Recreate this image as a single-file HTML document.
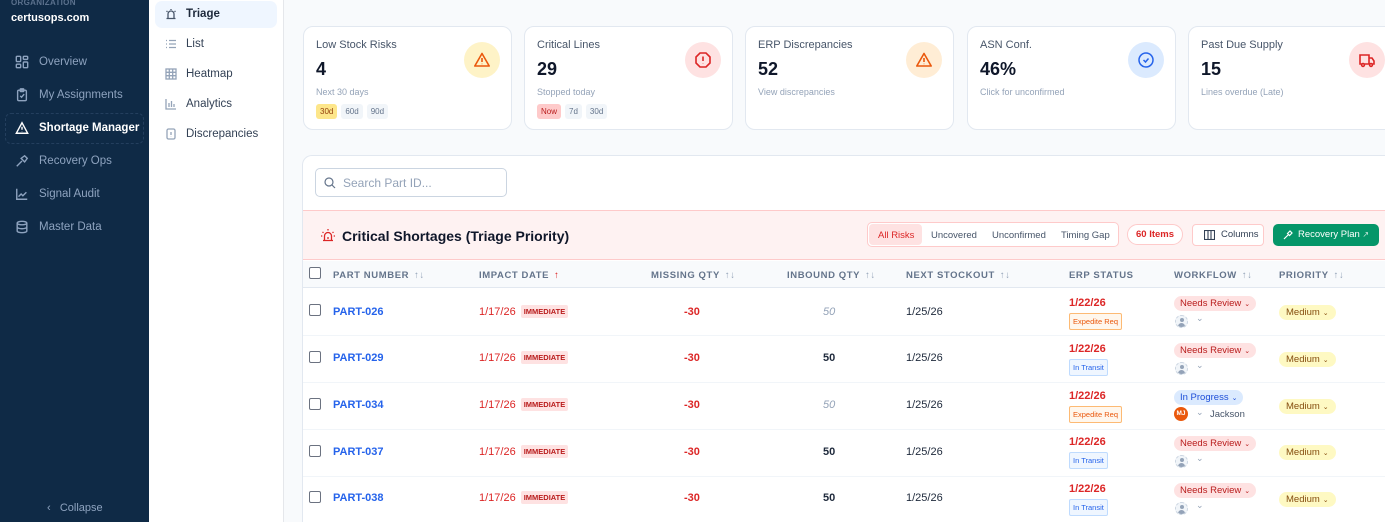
<!DOCTYPE html>
<html><head><meta charset="utf-8"><style>
*{box-sizing:border-box;margin:0;padding:0}
html,body{width:1385px;height:522px;overflow:hidden}
body{font-family:"Liberation Sans",sans-serif;background:#f8fafc;position:relative;font-size:12px;color:#1e293b}
.a{position:absolute;white-space:nowrap}
#sb{left:0;top:0;width:149px;height:522px;background:#0f2a46}
.nav{position:absolute;left:15px;font-size:11.5px;color:#8ea3bf;display:flex;align-items:center;gap:10px}
.nav svg{width:14px;height:14px;stroke:#8ea3bf;fill:none;stroke-width:1.6}
#sub{left:149px;top:0;width:135px;height:522px;background:#fff;border-right:1px solid #e5e7eb}
.sn{position:absolute;left:16px;font-size:11.5px;color:#334155;display:flex;align-items:center;gap:9px}
.sn svg{width:12px;height:12px;stroke:#94a3b8;fill:none;stroke-width:1.3}
.card{position:absolute;top:26px;height:104px;width:209px;background:#fff;border:1px solid #e2e8f0;border-radius:10px}
.card .t{position:absolute;left:12px;top:12px;font-size:11px;color:#475569}
.card .v{position:absolute;left:12px;top:32px;font-size:18px;font-weight:bold;color:#0f172a}
.card .s{position:absolute;left:12px;top:60px;font-size:9px;color:#94a3b8}
.card .ic{position:absolute;left:160px;top:15px;width:36px;height:36px;border-radius:50%;display:flex;align-items:center;justify-content:center}
.chips{position:absolute;left:12px;top:77px;display:flex;gap:4px}
.chips span{font-size:8px;color:#64748b;background:#f1f5f9;border-radius:3px;padding:3px 4px}
#panel{left:302px;top:155px;width:1100px;height:367px;background:#fff;border:1px solid #e2e8f0;border-bottom:none;border-radius:10px 10px 0 0}
.th{position:absolute;top:270px;font-size:9.5px;font-weight:bold;color:#64748b;letter-spacing:.6px}
.srt{color:#94a3b8;font-weight:normal;margin-left:5px}
.cb{position:absolute;left:309px;width:12px;height:12px;border:1.3px solid #6b7280;border-radius:2px;background:#fff}
.pn{position:absolute;left:333px;font-size:11px;font-weight:bold;color:#2563eb}
.dt{position:absolute;left:479px;font-size:11px;color:#dc2626}
.imm{font-size:7.5px;font-weight:bold;color:#b91c1c;background:#fee2e2;border-radius:2px;padding:2px 3px;margin-left:5px;vertical-align:1px}
.mq{position:absolute;left:684px;font-size:11px;font-weight:bold;color:#dc2626}
.iq{position:absolute;left:823px;font-size:11px}
.ns{position:absolute;left:906px;font-size:11px;color:#1e293b}
.ed{position:absolute;left:1069px;font-size:11px;font-weight:bold;color:#dc2626}
.eb{position:absolute;left:1069px;font-size:7.5px;border-radius:2px;padding:3px 3px}
.exp{color:#ea580c;background:#fff7ed;border:1px solid #fdba74}
.tr{color:#2563eb;background:#eff6ff;border:1px solid #bfdbfe}
.wf{position:absolute;left:1174px;font-size:9.5px;border-radius:9px;padding:2px 6px}
.nr{background:#fee2e2;color:#b91c1c}
.ip{background:#dbeafe;color:#1d4ed8}
.av{position:absolute;left:1175px;width:13px;height:13px;border-radius:50%;border:1px dashed #cbd5e1;background:#f1f5f9;overflow:hidden}
.av:before{content:"";position:absolute;left:3.5px;top:2px;width:4px;height:4px;border-radius:50%;background:#94a3b8}
.av:after{content:"";position:absolute;left:2px;top:7px;width:7px;height:5px;border-radius:4px 4px 0 0;background:#94a3b8}
.pr{position:absolute;left:1279px;font-size:9.5px;background:#fef9c3;color:#854d0e;border-radius:9px;padding:2px 7px}
.rl{position:absolute;left:303px;width:1090px;height:1px;background:#f1f5f9}
.car{font-size:7px;margin-left:3px}
</style></head><body>
<div id="sb" class="a">
<div class="a" style="left:11px;top:-2px;font-size:8px;color:#5b718d;font-weight:bold;letter-spacing:.3px">ORGANIZATION</div>
<div class="a" style="left:11px;top:12px;font-size:11px;color:#fff;font-weight:bold">certusops.com</div>
<div class="nav" style="top:55px"><svg viewBox="0 0 16 16"><rect x="1.5" y="1.5" width="5" height="6" rx="1"/><rect x="9.5" y="1.5" width="5" height="3.5" rx="1"/><rect x="9.5" y="8" width="5" height="6.5" rx="1"/><rect x="1.5" y="10.5" width="5" height="4" rx="1"/></svg>Overview</div>
<div class="nav" style="top:88px"><svg viewBox="0 0 16 16"><rect x="3" y="2.5" width="10" height="12" rx="1.5"/><rect x="6" y="1" width="4" height="3" rx=".5"/><path d="M6 9l1.5 1.5L10.5 7"/></svg>My Assignments</div>
<div class="a" style="left:5px;top:113px;width:139px;height:31px;border:1px dashed #243f5e;border-radius:6px"></div>
<div class="nav" style="top:121px;color:#fff;font-weight:bold"><svg viewBox="0 0 16 16" style="stroke:#fff"><path d="M8 2L1.5 14h13z"/><path d="M8 6.5v3.5M8 11.8v.4"/></svg>Shortage Manager</div>
<div class="nav" style="top:154px"><svg viewBox="0 0 16 16"><path d="M2 14l6-6M7 5l4-3 3 3-3 4z"/></svg>Recovery Ops</div>
<div class="nav" style="top:187px"><svg viewBox="0 0 16 16"><path d="M2 2v12h12M4 11l3-3 2 2 4-4"/></svg>Signal Audit</div>
<div class="nav" style="top:220px"><svg viewBox="0 0 16 16"><ellipse cx="8" cy="3.5" rx="5.5" ry="2"/><path d="M2.5 3.5v9c0 1.1 2.5 2 5.5 2s5.5-.9 5.5-2v-9M2.5 8c0 1.1 2.5 2 5.5 2s5.5-.9 5.5-2"/></svg>Master Data</div>
<div class="a" style="left:47px;top:502px;font-size:11px;color:#8ea3bf">‹&nbsp;&nbsp;&nbsp;Collapse</div>
</div>
<div id="sub" class="a">
<div class="a" style="left:6px;top:1px;width:122px;height:27px;background:#eff6ff;border-radius:7px"></div>
<div class="sn" style="top:8px;color:#1e293b;font-weight:bold"><svg viewBox="0 0 12 12" style="stroke:#475569"><path d="M3 10V6a3 3 0 016 0v4M1.5 10.5h9M6 1v1M1.5 3l1 .8M10.5 3l-1 .8"/></svg>Triage</div>
<div class="sn" style="top:38px"><svg viewBox="0 0 12 12"><path d="M1 2.5h1M4 2.5h7M1 6h1M4 6h7M1 9.5h1M4 9.5h7"/></svg>List</div>
<div class="sn" style="top:68px"><svg viewBox="0 0 12 12"><rect x="1" y="1" width="10" height="10"/><path d="M4.3 1v10M7.7 1v10M1 4.3h10M1 7.7h10"/></svg>Heatmap</div>
<div class="sn" style="top:98px"><svg viewBox="0 0 12 12"><path d="M1 1v10h10M4 9V5M6.5 9V3M9 9V6"/></svg>Analytics</div>
<div class="sn" style="top:128px"><svg viewBox="0 0 12 12"><rect x="2" y="1" width="8" height="10" rx="1.5"/><path d="M6 4v3M6 8.5v.3"/></svg>Discrepancies</div>
</div>

<div class="card" style="left:303px"><div class="t">Low Stock Risks</div><div class="v">4</div><div class="s">Next 30 days</div>
<div class="chips"><span style="background:#fde68a;color:#92400e">30d</span><span>60d</span><span>90d</span></div>
<div class="ic" style="background:#fef3c7"><svg width="18" height="18" viewBox="0 0 18 18" fill="none" stroke="#ea580c" stroke-width="1.6"><path d="M9 2.5L1.8 15h14.4z" stroke-linejoin="round"/><path d="M9 7v4M9 12.8v.3"/></svg></div></div>
<div class="card" style="left:524px"><div class="t">Critical Lines</div><div class="v">29</div><div class="s">Stopped today</div>
<div class="chips"><span style="background:#fecaca;color:#b91c1c">Now</span><span>7d</span><span>30d</span></div>
<div class="ic" style="background:#fee2e2"><svg width="18" height="18" viewBox="0 0 18 18" fill="none" stroke="#dc2626" stroke-width="1.6"><path d="M6 2h6l4 4v6l-4 4H6l-4-4V6z"/><path d="M9 5.5v4.5M9 12v.3"/></svg></div></div>
<div class="card" style="left:745px"><div class="t">ERP Discrepancies</div><div class="v">52</div><div class="s">View discrepancies</div>
<div class="ic" style="background:#ffedd5"><svg width="18" height="18" viewBox="0 0 18 18" fill="none" stroke="#ea580c" stroke-width="1.6"><path d="M9 2.5L1.8 15h14.4z" stroke-linejoin="round"/><path d="M9 7v4M9 12.8v.3"/></svg></div></div>
<div class="card" style="left:967px"><div class="t">ASN Conf.</div><div class="v">46%</div><div class="s">Click for unconfirmed</div>
<div class="ic" style="background:#dbeafe"><svg width="18" height="18" viewBox="0 0 18 18" fill="none" stroke="#2563eb" stroke-width="1.5"><circle cx="9" cy="9" r="7"/><path d="M6.5 9l2 2 3-3.5"/></svg></div></div>
<div class="card" style="left:1188px"><div class="t">Past Due Supply</div><div class="v">15</div><div class="s">Lines overdue (Late)</div>
<div class="ic" style="background:#fee2e2"><svg width="18" height="18" viewBox="0 0 18 18" fill="none" stroke="#dc2626" stroke-width="1.6"><path d="M2 4h9v9H2zM11 7h3l2 3v3h-5"/><circle cx="5" cy="14" r="1.4" fill="#fee2e2"/><circle cx="13" cy="14" r="1.4" fill="#fee2e2"/></svg></div></div>

<div id="panel" class="a"></div>
<div class="a" style="left:315px;top:168px;width:192px;height:29px;border:1px solid #cbd5e1;border-radius:5px;background:#fff"></div>
<svg class="a" style="left:324px;top:177px" width="12" height="12" viewBox="0 0 12 12" fill="none" stroke="#64748b" stroke-width="1.2"><circle cx="5" cy="5" r="4"/><path d="M8 8l3 3"/></svg>
<div class="a" style="left:343px;top:176px;font-size:12px;color:#94a3b8">Search Part ID...</div>

<div class="a" style="left:303px;top:210px;width:1090px;height:50px;background:#fef2f2;border-top:1px solid #fecaca;border-bottom:1px solid #fecaca"></div>
<svg class="a" style="left:320px;top:227px" width="16" height="16" viewBox="0 0 16 16" fill="none" stroke="#dc2626" stroke-width="1.3"><path d="M4.5 13V9a3.5 3.5 0 017 0v4M3 13.5h10M8 2v1.5M2.5 5l1 .8M13.5 5l-1 .8M1 9h1.3M13.7 9H15M8 10v2"/></svg>
<div class="a" style="left:342px;top:228px;font-size:14px;font-weight:bold;color:#0f172a">Critical Shortages (Triage Priority)</div>
<div class="a" style="left:867px;top:222px;width:252px;height:25px;background:#fff;border:1px solid #fecaca;border-radius:5px"></div>
<div class="a" style="left:869px;top:224px;width:53px;height:21px;background:#fee2e2;border-radius:4px"></div>
<div class="a" style="left:878px;top:230px;font-size:9.5px;color:#dc2626">All Risks</div>
<div class="a" style="left:931px;top:230px;font-size:9.5px;color:#475569">Uncovered</div>
<div class="a" style="left:992px;top:230px;font-size:9.5px;color:#475569">Unconfirmed</div>
<div class="a" style="left:1061px;top:230px;font-size:9.5px;color:#475569">Timing Gap</div>
<div class="a" style="left:1127px;top:224px;width:56px;height:21px;border:1px solid #fecaca;border-radius:11px;background:#fff;font-size:9.5px;font-weight:bold;color:#dc2626;text-align:center;line-height:19px">60 Items</div>
<div class="a" style="left:1192px;top:224px;width:72px;height:22px;border:1px solid #fecaca;border-radius:4px;background:#fff;font-size:9.5px;color:#334155;line-height:20px;padding-left:28px">Columns</div>
<svg class="a" style="left:1204px;top:230px" width="11" height="10" viewBox="0 0 11 10" fill="none" stroke="#334155" stroke-width="1.1"><rect x=".5" y=".5" width="10" height="9"/><path d="M4 .5v9M7 .5v9"/></svg>
<div class="a" style="left:1273px;top:224px;width:106px;height:22px;background:#059669;border-radius:5px;font-size:9.5px;color:#fff;line-height:22px;padding-left:25px">Recovery Plan <span style="font-size:8px;opacity:.8">↗</span></div>
<svg class="a" style="left:1283px;top:230px" width="10" height="10" viewBox="0 0 10 10" fill="none" stroke="#fff" stroke-width="1.2"><path d="M1 9l4-4M4.5 3.5L7 1l2 2-2.5 2.5z"/></svg>

<div class="a" style="left:303px;top:261px;width:1090px;height:27px;background:#f8fafc;border-bottom:1px solid #e2e8f0"></div>
<div class="cb" style="top:267px"></div>
<div class="th" style="left:333px">PART NUMBER<span class="srt">↑↓</span></div>
<div class="th" style="left:479px">IMPACT DATE<span class="srt" style="color:#dc2626;font-weight:bold">↑</span></div>
<div class="th" style="left:651px">MISSING QTY<span class="srt">↑↓</span></div>
<div class="th" style="left:787px">INBOUND QTY<span class="srt">↑↓</span></div>
<div class="th" style="left:906px">NEXT STOCKOUT<span class="srt">↑↓</span></div>
<div class="th" style="left:1069px">ERP STATUS</div>
<div class="th" style="left:1174px">WORKFLOW<span class="srt">↑↓</span></div>
<div class="th" style="left:1279px">PRIORITY<span class="srt">↑↓</span></div>

<div class="cb" style="top:304px"></div><div class="pn" style="top:306px">PART-026</div><div class="dt" style="top:306px">1/17/26<span class="imm">IMMEDIATE</span></div><div class="mq" style="top:306px">-30</div><div class="iq" style="top:306px;color:#94a3b8;font-style:italic">50</div><div class="ns" style="top:306px">1/25/26</div>
<div class="ed" style="top:297px">1/22/26</div><div class="eb exp" style="top:313px">Expedite Req</div>
<div class="wf nr" style="top:296px">Needs Review<span class="car">⌄</span></div><div class="av" style="top:315px"></div><div class="a" style="left:1196px;top:313px;font-size:9px;color:#94a3b8">⌄</div>
<div class="pr" style="top:305px">Medium<span class="car">⌄</span></div>
<div class="rl" style="top:335px"></div>

<div class="cb" style="top:351px"></div><div class="pn" style="top:352px">PART-029</div><div class="dt" style="top:352px">1/17/26<span class="imm">IMMEDIATE</span></div><div class="mq" style="top:352px">-30</div><div class="iq" style="top:352px;font-weight:bold">50</div><div class="ns" style="top:352px">1/25/26</div>
<div class="ed" style="top:343px">1/22/26</div><div class="eb tr" style="top:359px">In Transit</div>
<div class="wf nr" style="top:343px">Needs Review<span class="car">⌄</span></div><div class="av" style="top:362px"></div><div class="a" style="left:1196px;top:360px;font-size:9px;color:#94a3b8">⌄</div>
<div class="pr" style="top:352px">Medium<span class="car">⌄</span></div>
<div class="rl" style="top:382px"></div>

<div class="cb" style="top:398px"></div><div class="pn" style="top:399px">PART-034</div><div class="dt" style="top:399px">1/17/26<span class="imm">IMMEDIATE</span></div><div class="mq" style="top:399px">-30</div><div class="iq" style="top:399px;color:#94a3b8;font-style:italic">50</div><div class="ns" style="top:399px">1/25/26</div>
<div class="ed" style="top:390px">1/22/26</div><div class="eb exp" style="top:406px">Expedite Req</div>
<div class="wf ip" style="top:390px">In Progress<span class="car">⌄</span></div><div class="a" style="left:1174px;top:407px;width:14px;height:14px;border-radius:50%;background:#ea580c;color:#fff;font-size:6.5px;font-weight:bold;text-align:center;line-height:14px">MJ</div><div class="a" style="left:1196px;top:407px;font-size:9px;color:#94a3b8">⌄</div><div class="a" style="left:1210px;top:409px;font-size:9.5px;color:#475569">Jackson</div>
<div class="pr" style="top:399px">Medium<span class="car">⌄</span></div>
<div class="rl" style="top:429px"></div>

<div class="cb" style="top:445px"></div><div class="pn" style="top:446px">PART-037</div><div class="dt" style="top:446px">1/17/26<span class="imm">IMMEDIATE</span></div><div class="mq" style="top:446px">-30</div><div class="iq" style="top:446px;font-weight:bold">50</div><div class="ns" style="top:446px">1/25/26</div>
<div class="ed" style="top:436px">1/22/26</div><div class="eb tr" style="top:452px">In Transit</div>
<div class="wf nr" style="top:436px">Needs Review<span class="car">⌄</span></div><div class="av" style="top:455px"></div><div class="a" style="left:1196px;top:453px;font-size:9px;color:#94a3b8">⌄</div>
<div class="pr" style="top:445px">Medium<span class="car">⌄</span></div>
<div class="rl" style="top:476px"></div>

<div class="cb" style="top:491px"></div><div class="pn" style="top:492px">PART-038</div><div class="dt" style="top:492px">1/17/26<span class="imm">IMMEDIATE</span></div><div class="mq" style="top:492px">-30</div><div class="iq" style="top:492px;font-weight:bold">50</div><div class="ns" style="top:492px">1/25/26</div>
<div class="ed" style="top:483px">1/22/26</div><div class="eb tr" style="top:499px">In Transit</div>
<div class="wf nr" style="top:483px">Needs Review<span class="car">⌄</span></div><div class="av" style="top:502px"></div><div class="a" style="left:1196px;top:500px;font-size:9px;color:#94a3b8">⌄</div>
<div class="pr" style="top:492px">Medium<span class="car">⌄</span></div>
</body></html>
